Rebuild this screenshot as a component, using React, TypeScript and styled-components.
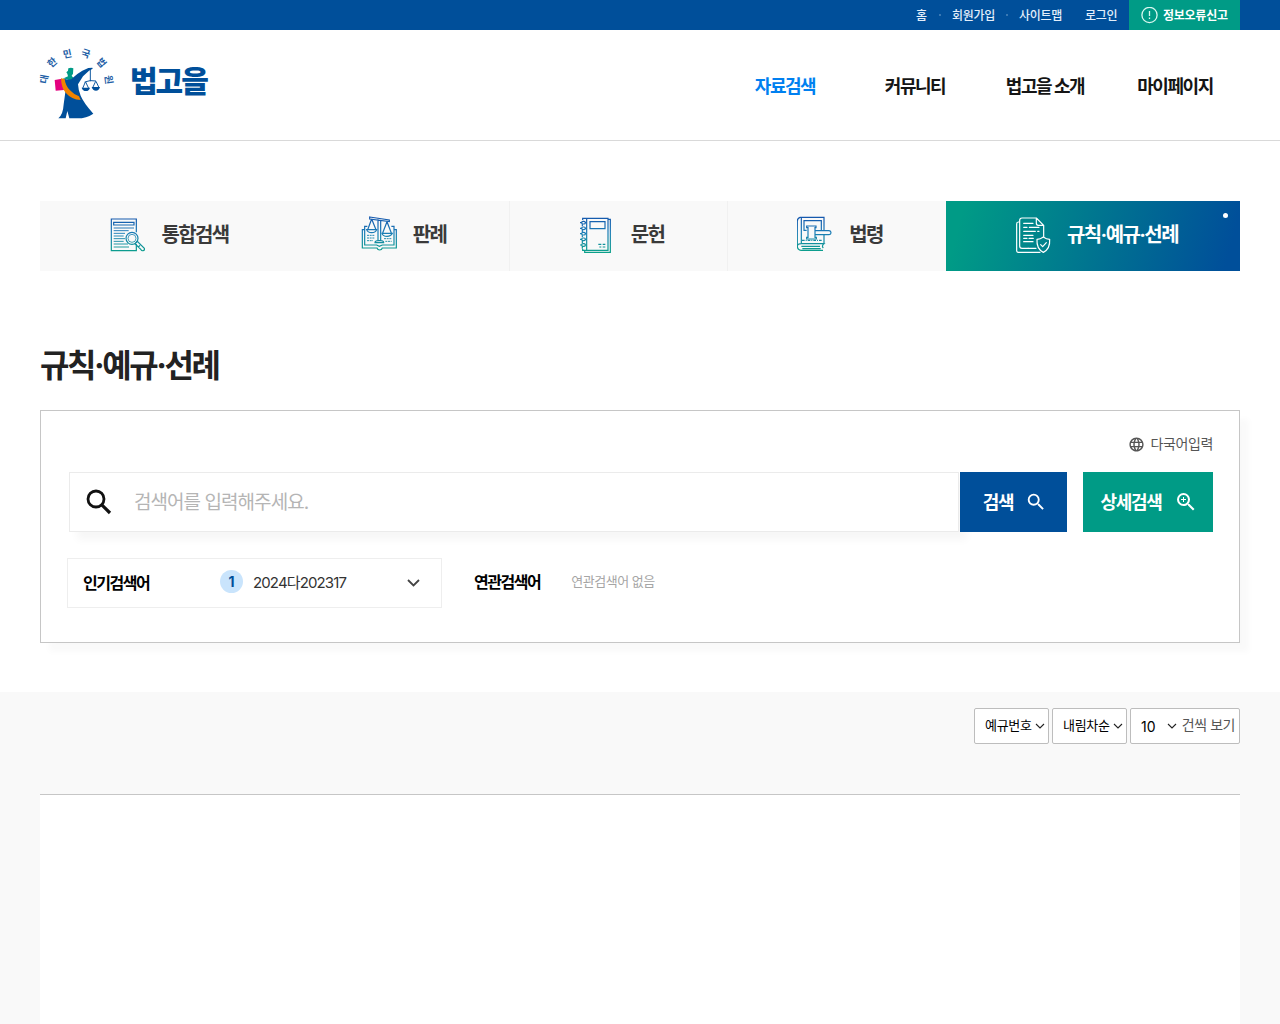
import React from 'react';
import styled, { createGlobalStyle, css } from 'styled-components';
import { MdLanguage, MdSearch, MdZoomIn } from 'react-icons/md';

const GlobalStyle = createGlobalStyle`
  *, *::before, *::after { box-sizing: border-box; }
  body {
    margin: 0;
    background: #fff;
    color: #222;
    font-family: Inter, 'Noto Sans CJK KR', sans-serif;
    overflow: hidden;
  }
  button, input { font-family: inherit; }
  ul { list-style: none; margin: 0; padding: 0; }
  a { color: inherit; text-decoration: none; }
`;

const Page = styled.div`
  height: 1024px;
  display: flex;
  flex-direction: column;
  overflow: hidden;
`;

const Inner = styled.div`
  width: 1200px;
  margin: 0 auto;
`;

const TopBar = styled.div`
  height: 30px;
  flex: none;
  background: #004f9a;
`;

const TopInner = styled(Inner)`
  height: 30px;
  display: flex;
  justify-content: flex-end;
  align-items: stretch;
`;

const UtilLinks = styled.ul`
  display: flex;
  align-items: center;
  color: #e3eefa;
  font-size: 12px;
  font-weight: 500;
  letter-spacing: -0.25px;
  line-height: 20px;
  white-space: nowrap;
`;

const UtilItem = styled.li<{ $w: number }>`
  width: ${(p) => p.$w}px;
  padding-top: 2px;
`;

const Dot = styled.li`
  width: 2px;
  height: 2px;
  border-radius: 50%;
  background: #4d86bb;
  margin-right: 11px;
`;

const ReportButton = styled.button`
  width: 111px;
  border: 0;
  padding: 0 0 0 12px;
  background: #009b86;
  color: #fff;
  display: flex;
  align-items: center;
  gap: 5px;
  font-size: 12px;
  line-height: 28px;
  font-weight: 700;
  letter-spacing: -0.25px;
  white-space: nowrap;
`;

const ReportLabel = styled.span`
  padding-top: 1px;
`;

const Header = styled.header`
  height: 111px;
  flex: none;
  border-bottom: 1px solid #d9d9d9;
`;

const HeaderInner = styled(Inner)`
  height: 110px;
  display: flex;
  justify-content: space-between;
`;

const Brand = styled.a`
  display: flex;
  align-items: flex-start;
  padding-top: 16px;
  gap: 13px;
`;

const BrandName = styled.span`
  padding-top: 2px;
  color: #004f9a;
  font-size: 30px;
  font-weight: 900;
  letter-spacing: -2px;
  line-height: 66px;
`;

const Nav = styled.nav`
  display: flex;
`;

const NavItem = styled.a<{ $active?: boolean }>`
  width: 130px;
  line-height: 113px;
  text-align: center;
  font-size: 18px;
  font-weight: 700;
  letter-spacing: -1.45px;
  color: ${(p) => (p.$active ? '#0080f0' : '#151515')};
`;

const Tabs = styled.nav`
  margin-top: 60px;
  height: 70px;
  display: grid;
  grid-template-columns: 251px 218px 218px 219px 294px;
`;

const Tab = styled.a<{ $active?: boolean; $line?: boolean }>`
  position: relative;
  display: flex;
  align-items: center;
  justify-content: center;
  gap: 16px;
  padding: 0 0 3px 7px;
  background: #f9f9f9;
  color: #3a3a3a;
  font-size: 20px;
  font-weight: 700;
  letter-spacing: -1.6px;
  white-space: nowrap;
  ${(p) => p.$line && css`box-shadow: inset 1px 0 0 #f1f1f1;`}
  ${(p) =>
    p.$active &&
    css`
      background: linear-gradient(105deg, #009b86 6%, #004f9a 95%);
      color: #fff;
      &::after {
        content: '';
        position: absolute;
        top: 12px;
        right: 12px;
        width: 5px;
        height: 5px;
        border-radius: 50%;
        background: #fff;
      }
    `}
  svg { flex: none; }
`;

const TabLabel = styled.span`
  line-height: 30px;
  padding-top: 1px;
`;

const Title = styled.h1`
  margin: 70px 0 0;
  height: 50px;
  line-height: 50px;
  font-size: 32px;
  font-weight: 700;
  letter-spacing: -2.45px;
  color: #222;
`;

const SearchPanel = styled.section`
  margin-top: 19px;
  height: 233px;
  padding: 22px 26px 0;
  border: 1px solid #c6c6c6;
  background: #fff;
  box-shadow: 9px 9px 6px rgba(0, 0, 0, 0.025);
`;

const LanguageRow = styled.div`
  height: 22px;
  display: flex;
  justify-content: flex-end;
  align-items: center;
  gap: 6px;
  color: #555;
  font-size: 14px;
  line-height: 20px;
  letter-spacing: -0.4px;
`;

const SearchRow = styled.form`
  margin: 17px 0 0 2px;
  height: 60px;
  display: flex;
`;

const Field = styled.label`
  width: 890px;
  display: flex;
  align-items: center;
  gap: 19px;
  padding-left: 15px;
  border: 1px solid #ebebeb;
  background: #fff;
  box-shadow: 8px 8px 8px rgba(0, 0, 0, 0.035);
`;

const Input = styled.input`
  flex: 1;
  border: 0;
  outline: 0;
  padding: 0;
  background: transparent;
  font-size: 19px;
  letter-spacing: -0.95px;
  height: 40px;
  &::placeholder { color: #b5b5b5; opacity: 1; }
`;

const ActionButton = styled.button<{ $bg: string; $w: number; $gap: number; $ml: number }>`
  width: ${(p) => p.$w}px;
  margin-left: ${(p) => p.$ml}px;
  border: 0;
  padding: 0 0 0 3px;
  display: flex;
  align-items: center;
  justify-content: center;
  gap: ${(p) => p.$gap}px;
  background: ${(p) => p.$bg};
  color: #fff;
  font-size: 18px;
  font-weight: 700;
  letter-spacing: -1.35px;
`;

const ActionLabel = styled.span`
  padding-bottom: 3px;
`;

const KeywordRow = styled.div`
  margin-top: 26px;
  display: flex;
  align-items: center;
`;

const Popular = styled.div`
  width: 375px;
  height: 50px;
  display: flex;
  align-items: center;
  padding: 0 21px 0 15px;
  border: 1px solid #eee;
`;

const KeywordLabel = styled.strong<{ $w?: number }>`
  width: ${(p) => (p.$w ? `${p.$w}px` : 'auto')};
  padding-bottom: 3px;
  font-size: 16px;
  font-weight: 700;
  letter-spacing: -1.45px;
  color: #000;
`;

const Rank = styled.span`
  margin-bottom: 4px;
  width: 23px;
  height: 23px;
  border-radius: 50%;
  background: #c9e4fc;
  color: #004f9a;
  font-size: 14px;
  font-weight: 700;
  line-height: 23px;
  text-align: center;
`;

const Keyword = styled.span`
  flex: 1;
  margin-left: 10px;
  padding-bottom: 4px;
  font-size: 15px;
  letter-spacing: -0.87px;
  color: #333;
`;

const Related = styled.div`
  margin-left: 32px;
  display: flex;
  align-items: center;
  gap: 31px;
`;

const RelatedLabel = styled(KeywordLabel)`
  padding-bottom: 5px;
`;

const NoRelated = styled.span`
  padding-bottom: 5px;
  font-size: 13px;
  letter-spacing: -0.5px;
  color: #a5a5a5;
`;

const Results = styled.main`
  margin-top: 49px;
  flex: 1;
  background: #f9f9f9;
`;

const ResultsInner = styled(Inner)`
  height: 100%;
  display: flex;
  flex-direction: column;
`;

const Filters = styled.div`
  height: 102px;
  padding-top: 16px;
  display: flex;
  justify-content: flex-end;
  gap: 3px;
`;

const Select = styled.div<{ $w: number; $pad?: number }>`
  width: ${(p) => p.$w}px;
  height: 36px;
  padding: 0 ${(p) => p.$pad ?? 3}px 0 10px;
  display: flex;
  align-items: center;
  justify-content: space-between;
  border: 1px solid #bdbdbd;
  border-radius: 2px;
  background: #fff;
  font-size: 13px;
  color: #000;
  letter-spacing: -0.3px;
  white-space: nowrap;
`;

const SelectValue = styled.span`
  padding-bottom: 3px;
`;

const PerPage = styled.span`
  padding-bottom: 4px;
  color: #555;
  font-size: 14px;
  letter-spacing: -0.45px;
`;

const Count = styled.span`
  width: 22px;
  font-size: 14px;
  letter-spacing: 0;
`;

const List = styled.div`
  flex: 1;
  border-top: 1px solid #c6c6c6;
  background: #fff;
`;

const EmblemSvg = styled.svg`
  overflow: visible;
`;

const ringLetters: [string, number, number, number][] = [
  ['대', 19, 99, -80],
  ['한', 43, 50, -42],
  ['민', 88, 24, -12],
  ['국', 143, 23, 18],
  ['법', 190, 50, 50],
  ['원', 212, 101, 82],
];

const Emblem = () => (
  <EmblemSvg width="77" height="76" viewBox="6 0 231 228">
    <g fill="#1f5fa6" fontSize="29" fontWeight="600" textAnchor="middle">
      {ringLetters.map(([c, x, y, r]) => (
        <text key={c} transform={`translate(${x} ${y}) rotate(${r})`} y="10">{c}</text>
      ))}
    </g>
    <path d="M50 102l22-4 6 34-25 2z" fill="#e4007f" />
    <path d="M91 67q8-3 15 0l-1 16-4 6 6 8-8 8-22-8 13-6-2-8-3-4 5-5z" fill="#009b86" />
    <path d="M76 97q12 7 24 3 8-8 18-16l15-10 18-8 12-1 1 3-11 6-18 17-15 24q1 19 8 34 8 20 38 54-20 14-48 14H94l-6-22-5 22H61q14-10 16-42l5-36z" fill="#004f9a" />
    <path d="M69 97l11 2q2 20 16 34 12 13 27 18l5 11q-28-2-45-22-13-14-14-43z" fill="#f08300" />
    <path d="M157 68v38M140 108q17-7 34-3M142 108l-8 19M143 108l9 19M173 106l-9 19M174 106l9 19" fill="none" stroke="#004f9a" strokeWidth="2.8" />
    <path d="M131 125h25q-3 10-12 10-10 0-13-10zM161 123h25q-3 11-12 11-10 0-13-11z" fill="#004f9a" />
  </EmblemSvg>
);

const IconFrame = ({ box, children }: { box: string; children: React.ReactNode }) => (
  <svg width="36" height="38" viewBox={box} fill="none" stroke="url(#tabStroke)" strokeWidth="3.6">
    <defs>
      <linearGradient id="tabStroke" gradientUnits="userSpaceOnUse" x1="0" y1="80" x2="0" y2="186">
        <stop offset="0" stopColor="#1557ad" />
        <stop offset="0.45" stopColor="#1b7cb6" />
        <stop offset="1" stopColor="#0ba08a" />
      </linearGradient>
    </defs>
    {children}
  </svg>
);

const SearchDocIcon = () => (
  <IconFrame box="240 76 108 114">
    <path d="M322 125V85h-75v95h75v-20M254 95h61v8h-61z" />
    <path d="M254 112h61M254 120h45M254 128h34M254 136h30M254 144h34M254 152h30M254 160h43M254 169h46" strokeWidth="2.8" />
    <circle cx="309" cy="143" r="18" />
    <circle cx="309" cy="143" r="12" strokeWidth="2.4" />
    <path d="M321 156l4-4 21 21q2 6-4 7-4 1-6-3l-18-18zM333 164l-5 5" />
  </IconFrame>
);

const ScalesIcon = () => (
  <IconFrame box="63 78 108 114">
    <path d="M89 81l59 9v5l-59-8zM114 88v64M122 91v61M105 158q0-6 10-6h7q9 0 9 6z" />
    <path d="M95 87l-12 32M95 87l13 32M80 119h30q-3 9-15 9t-15-9zM141 95l-13 34M141 95l13 34M126 130h31q-4 9-16 9t-15-9z" />
    <path d="M82 109h-8v56h36l8 4 9-4h35v-56h-8M74 119h-7v55h44q2 6 8 6t8-6h42v-55h-7M154 109h8" />
    <path d="M81 136h23M81 144h23M81 152h18M132 146h23M136 154h19" strokeDasharray="6 2" strokeWidth="2.8" />
  </IconFrame>
);

const NotebookIcon = () => (
  <IconFrame box="718 78 108 114">
    <path d="M729 90v-5h76v96h-76v-4M805 88h7v99h-77v-6M741 85v96M751 95h45v21h-45z" />
    {[98, 115, 131, 148, 165].map((y) => (
      <path key={y} d={`M726 ${y}q0-4 4-4h3q4 0 4 4t-4 4h-3q-4 0-4-4zM721 ${y}h5M737 ${y}h4M728 ${y + 5}v6`} />
    ))}
    <path d="M776 163h9M789 163h8M779 171h6M789 171h8" />
  </IconFrame>
);

const LawBookIcon = () => (
  <IconFrame box="233 78 108 114">
    <path d="M314 120V82h-72q-8 2-8 12v76q1 11 12 11h65M246 84v77M234 170q0-9 12-9h68v-26M246 161h68q-8 7-2 13M246 169h56M249 176h55" />
    <path d="M262 121h-8V92h52v28M262 108h28v5h-3v29h4v5h-29v-5h4v-29h-4zM287 122h42q6 1 6 6t-6 6h-42" />
    <path d="M248 151h62" strokeDasharray="8 3 3 3" />
  </IconFrame>
);

const RulesIcon = () => (
  <svg width="36" height="38" viewBox="107 76 108 114" fill="none" stroke="#fff" strokeWidth="3.6" strokeLinecap="round" strokeLinejoin="round">
    <path d="M170 173h-42q-7 0-7-7V89q0-7 7-7h43l22 22v34M171 82v16q0 6 6 6h16M121 94h-4q-5 0-5 6v80q0 5 5 5h65" />
    <path d="M133 98h28M133 110h10M150 110h29M133 122h35M175 122h4M133 134h28M133 143h10M149 143h13M133 153h28M146 173h1" />
    <path d="M192 139q9 7 19 7 2 29-19 39-21-10-19-39 10 0 19-7z" />
    <path d="M184 162l6 6 11-12" />
  </svg>
);

const AlertIcon = () => (
  <svg width="17" height="17" viewBox="0 0 17 17" fill="none" stroke="#d9f7ef" strokeWidth="1.3">
    <circle cx="8.5" cy="8" r="7.6" />
    <path d="M8.5 4v5M8.5 10.5v1.4" />
  </svg>
);

const LensIcon = () => (
  <svg width="30" height="30" viewBox="0 0 30 30" fill="none" stroke="#111" strokeWidth="2.8">
    <circle cx="11" cy="12" r="8" />
    <path d="M16.8 17.8l8.2 8.2" strokeWidth="3.2" />
  </svg>
);

const Chevron = ({ w, stroke = 1.1, color = '#222' }: { w: number; stroke?: number; color?: string }) => (
  <svg width={w} height={w * 0.6} viewBox={`0 0 ${w} ${w * 0.6}`} fill="none" stroke={color} strokeWidth={stroke}>
    <path d={`M1 1L${w / 2} ${w * 0.5}L${w - 1} 1`} />
  </svg>
);

export default function App() {
  return (
    <Page>
      <GlobalStyle />
      <TopBar>
        <TopInner>
          <UtilLinks>
            <UtilItem $w={23}>홈</UtilItem>
            <Dot />
            <UtilItem $w={54}>회원가입</UtilItem>
            <Dot />
            <UtilItem $w={66}>사이트맵</UtilItem>
            <UtilItem $w={44}>로그인</UtilItem>
          </UtilLinks>
          <ReportButton>
            <AlertIcon />
            <ReportLabel>정보오류신고</ReportLabel>
          </ReportButton>
        </TopInner>
      </TopBar>
      <Header>
        <HeaderInner>
          <Brand href="#">
            <Emblem />
            <BrandName>법고을</BrandName>
          </Brand>
          <Nav>
            <NavItem href="#" $active>자료검색</NavItem>
            <NavItem href="#">커뮤니티</NavItem>
            <NavItem href="#">법고을 소개</NavItem>
            <NavItem href="#">마이페이지</NavItem>
          </Nav>
        </HeaderInner>
      </Header>
      <Inner>
        <Tabs>
          <Tab href="#"><SearchDocIcon /><TabLabel>통합검색</TabLabel></Tab>
          <Tab href="#"><ScalesIcon /><TabLabel>판례</TabLabel></Tab>
          <Tab href="#" $line><NotebookIcon /><TabLabel>문헌</TabLabel></Tab>
          <Tab href="#" $line><LawBookIcon /><TabLabel>법령</TabLabel></Tab>
          <Tab href="#" $active><RulesIcon /><TabLabel>규칙·예규·선례</TabLabel></Tab>
        </Tabs>
        <Title>규칙·예규·선례</Title>
        <SearchPanel>
          <LanguageRow>
            <MdLanguage size={17} />
            <span>다국어입력</span>
          </LanguageRow>
          <SearchRow>
            <Field>
              <LensIcon />
              <Input placeholder="검색어를 입력해주세요." />
            </Field>
            <ActionButton type="button" $bg="#004f9a" $w={107} $gap={12} $ml={1}>
              <ActionLabel>검색</ActionLabel>
              <MdSearch size={22} />
            </ActionButton>
            <ActionButton type="button" $bg="#009b86" $w={130} $gap={13} $ml={16}>
              <ActionLabel>상세검색</ActionLabel>
              <MdZoomIn size={24} />
            </ActionButton>
          </SearchRow>
          <KeywordRow>
            <Popular>
              <KeywordLabel $w={137}>인기검색어</KeywordLabel>
              <Rank>1</Rank>
              <Keyword>2024다202317</Keyword>
              <Chevron w={13} stroke={1.8} color="#444" />
            </Popular>
            <Related>
              <RelatedLabel>연관검색어</RelatedLabel>
              <NoRelated>연관검색어 없음</NoRelated>
            </Related>
          </KeywordRow>
        </SearchPanel>
      </Inner>
      <Results>
        <ResultsInner>
          <Filters>
            <Select $w={75}><SelectValue>예규번호</SelectValue><Chevron w={10} /></Select>
            <Select $w={75}><SelectValue>내림차순</SelectValue><Chevron w={10} /></Select>
            <Select $w={110} $pad={4}>
              <Count>10</Count>
              <Chevron w={10} />
              <PerPage>건씩 보기</PerPage>
            </Select>
          </Filters>
          <List />
        </ResultsInner>
      </Results>
    </Page>
  );
}
